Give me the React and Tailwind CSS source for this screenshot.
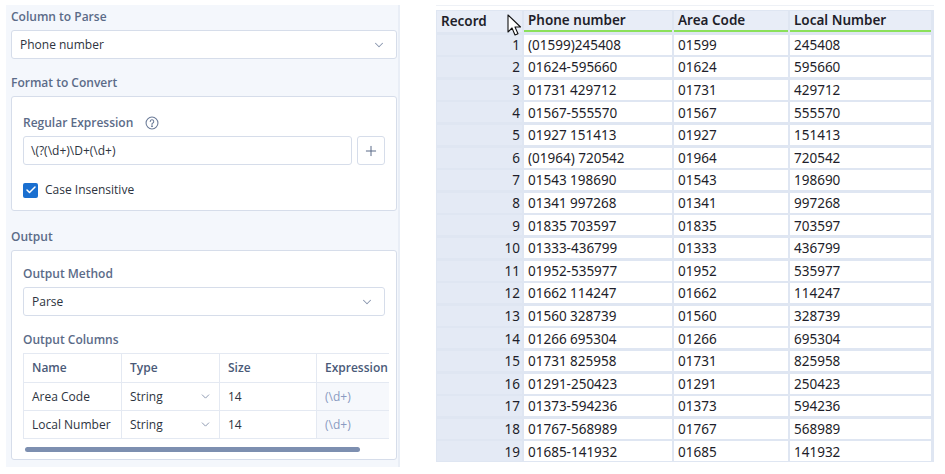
import React from 'react';
import { ChevronDown, Plus, Check } from 'lucide-react';

const rows = [
  ['(01599)245408', '01599', '245408'],
  ['01624-595660', '01624', '595660'],
  ['01731 429712', '01731', '429712'],
  ['01567-555570', '01567', '555570'],
  ['01927 151413', '01927', '151413'],
  ['(01964) 720542', '01964', '720542'],
  ['01543 198690', '01543', '198690'],
  ['01341 997268', '01341', '997268'],
  ['01835 703597', '01835', '703597'],
  ['01333-436799', '01333', '436799'],
  ['01952-535977', '01952', '535977'],
  ['01662 114247', '01662', '114247'],
  ['01560 328739', '01560', '328739'],
  ['01266 695304', '01266', '695304'],
  ['01731 825958', '01731', '825958'],
  ['01291-250423', '01291', '250423'],
  ['01373-594236', '01373', '594236'],
  ['01767-568989', '01767', '568989'],
  ['01685-141932', '01685', '141932'],
];

const font = { fontFamily: '"Open Sans", "Noto Sans", sans-serif' };

const Label = ({ children, className = '' }) => (
  <p className={`text-[12px] h-[12px] font-semibold text-[#5b6b88] leading-none ${className}`}>{children}</p>
);

const Select = ({ value }) => (
  <div className="h-[29px] bg-white border border-[#d6ddea] rounded-[3px] flex items-center justify-between pl-[8px] pr-[10px]">
    <span className="text-[12px] text-[#2d3340]">{value}</span>
    <ChevronDown className="w-[14px] h-[14px] text-[#8895ad]" strokeWidth={1.75} />
  </div>
);

const App = () => {
  return (
    <div className="w-[945px] h-[474px] bg-white flex" style={font}>
      {/* Config panel */}
      <div className="ml-[6px] mt-[5px] w-[394px] h-[462px] bg-[#f4f7fc] border-r-2 border-[#e9eef6] pl-[5px] pr-[1px] pt-[6px]">
        <Label>Column to Parse</Label>
        <div className="mt-[7px]">
          <Select value="Phone number" />
        </div>

        <Label className="mt-[18px]">Format to Convert</Label>
        <div className="mt-[7px] h-[115px] bg-white border border-[#d6ddea] rounded-[3px] px-[11px] pt-[19px]">
          <div className="flex items-center gap-[12px]">
            <Label>Regular Expression</Label>
            <svg width="14" height="14" viewBox="0 0 16 16" fill="none" stroke="#6b7b98" strokeWidth="1.2">
              <circle cx="8" cy="8" r="6.8" />
              <path d="M6 6.3a2 2 0 1 1 2.6 1.9c-.4.2-.6.5-.6.9v.6" strokeLinecap="round" />
              <circle cx="8" cy="11.6" r="0.5" fill="#6b7b98" />
            </svg>
          </div>
          <div className="mt-[6px] flex gap-[5px]">
            <div className="flex-1 h-[29px] border border-[#d6ddea] rounded-[3px] flex items-center pl-[7px]">
              <span className="text-[12px] text-[#2d3340]">\(?(\d+)\D+(\d+)</span>
            </div>
            <div className="w-[28px] h-[29px] border border-[#d6ddea] rounded-[3px] flex items-center justify-center">
              <Plus className="w-[16px] h-[16px] text-[#5b6b88]" strokeWidth={1.5} />
            </div>
          </div>
          <div className="mt-[16px] flex items-center gap-[7px]">
            <div className="w-[15px] h-[15px] rounded-[2px] bg-[#1a6fd0] flex items-center justify-center">
              <Check className="w-[12px] h-[12px] text-white" strokeWidth={3} />
            </div>
            <span className="text-[12px] text-[#2d3340]">Case Insensitive</span>
          </div>
        </div>

        <Label className="mt-[20px]">Output</Label>
        <div className="mt-[7px] h-[210px] bg-white border border-[#d6ddea] rounded-[3px] pl-[11px] pt-[17px] overflow-hidden">
          <div className="pr-[11px]">
            <Label>Output Method</Label>
            <div className="mt-[7px]">
              <Select value="Parse" />
            </div>
          </div>
          <Label className="mt-[18px]">Output Columns</Label>
          <div className="mt-[7px] w-[366px] overflow-hidden">
            <div className="w-[400px] border-t border-l border-[#e4e9f2] text-[12px]">
              <div className="grid grid-cols-[98px_98px_97px_107px] h-[29px] border-b border-[#e4e9f2]">
                {['Name', 'Type', 'Size', 'Expression'].map((h) => (
                  <div key={h} className="border-r border-[#e4e9f2] flex items-center pl-[8px] font-semibold text-[#4a5a78]">{h}</div>
                ))}
              </div>
              {['Area Code', 'Local Number'].map((n) => (
                <div key={n} className="grid grid-cols-[98px_98px_97px_107px] h-[28px] border-b border-[#e4e9f2]">
                  <div className="border-r border-[#e4e9f2] flex items-center pl-[8px] text-[#2d3340]">{n}</div>
                  <div className="border-r border-[#e4e9f2] flex items-center justify-between pl-[8px] pr-[7px] text-[#2d3340]">
                    String
                    <ChevronDown className="w-[13px] h-[13px] text-[#8895ad]" strokeWidth={1.75} />
                  </div>
                  <div className="border-r border-[#e4e9f2] flex items-center pl-[8px] text-[#2d3340]">14</div>
                  <div className="bg-[#f6f8fc] flex items-center pl-[8px] text-[#8a9bc2]">(\d+)</div>
                </div>
              ))}
            </div>
          </div>
          <div className="mt-[8px] ml-[2px] w-[335px] h-[5px] rounded-full bg-[#7d8fb0]" />
        </div>
      </div>

      {/* Result grid */}
      <div className="ml-[36px] mt-[5px] w-[498px]">
        <div className="border-t border-[#eef1f6] h-[5px]" />
        <div className="relative bg-[#dfe6f2] p-[1px] text-[13.5px] text-[#1e1e2a]" style={{ fontFamily: '"Noto Sans", "Open Sans", sans-serif' }}>
          <div className="grid grid-cols-[85px_148px_114px_141px] gap-x-[2px] gap-y-[2.6px]">
            {['Record', 'Phone number', 'Area Code', 'Local Number'].map((h, i) => (
              <div
                key={h}
                className={`h-[21px] bg-[#e8edf7] font-semibold flex items-center pl-[4px] pt-[1px] leading-none ${i > 0 ? 'border-b-2 border-[#8be05a]' : ''}`}
              >
                {h}
              </div>
            ))}
            {rows.map((r, idx) => (
              <React.Fragment key={idx}>
                <div className="h-[20px] bg-[#e4eaf5] flex items-center justify-end pr-[2px] pt-[2px] leading-none">{idx + 1}</div>
                {r.map((c, j) => (
                  <div key={j} className="h-[20px] bg-white flex items-center pl-[4px] pt-[2px] leading-none">{c}</div>
                ))}
              </React.Fragment>
            ))}
          </div>
          {/* mouse cursor */}
          <svg className="absolute left-[71px] top-[4px]" width="16" height="24" viewBox="0 0 16 24">
            <path d="M1 1 L1 18 L5 14 L8 21 L11 19.8 L8 13 L13.5 13 Z" fill="white" stroke="#111" strokeWidth="1.1" strokeLinejoin="round" />
          </svg>
        </div>
      </div>
    </div>
  );
};

export default App;
